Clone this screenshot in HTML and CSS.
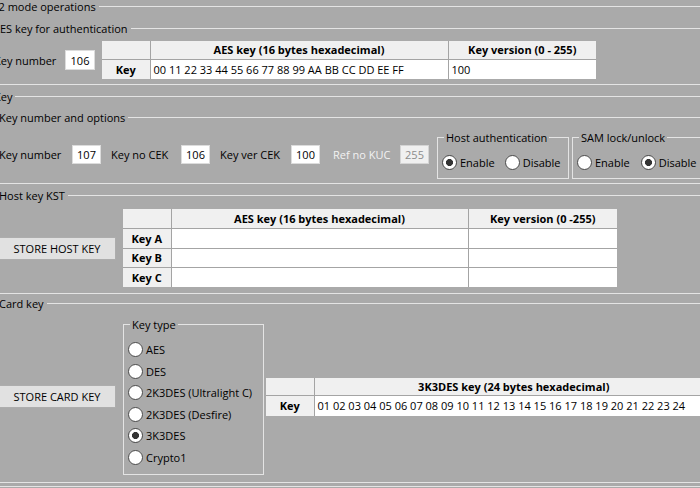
FILE: index.html
```html
<!DOCTYPE html>
<html>
<head>
<meta charset="utf-8">
<link rel="stylesheet" href="styles.css">
</head>
<body>
<div class="viewport">
  <div class="canvas">
    <div class="gt t-outer"><span>AV2 mode operations</span></div>

    <div class="gt t-aes"><span>AES key for authentication</span></div>
    <div class="aes-row">
      <span class="lbl lbl-aesno">Key number</span>
      <span class="num num-aes">106</span>
      <table class="grid aes-grid">
        <colgroup><col class="c48"><col class="c298"><col class="c148"></colgroup>
        <tr class="h18"><th></th><th>AES key (16 bytes hexadecimal)</th><th>Key version (0 - 255)</th></tr>
        <tr class="h20"><th>Key</th><td>00 11 22 33 44 55 66 77 88 99 AA BB CC DD EE FF</td><td>100</td></tr>
      </table>
    </div>
    <div class="gline gl-aes"></div>

    <div class="gt t-key"><span>Key</span></div>

    <div class="gt t-opt"><span>Key number and options</span></div>
    <div class="opt-row">
      <div class="opt-fields">
        <span class="lbl w73">Key number</span>
        <span class="num">107</span>
        <span class="lbl w70 ml10">Key no CEK</span>
        <span class="num">106</span>
        <span class="lbl w71 ml10">Key ver CEK</span>
        <span class="num">100</span>
        <span class="lbl w67 ml13 disabled">Ref no KUC</span>
        <span class="num num-dis">255</span>
      </div>
      <fieldset class="gbox gb-host">
        <legend>Host authentication</legend>
        <div class="radios">
          <span class="radio on">Enable</span>
          <span class="radio r2-host">Disable</span>
        </div>
      </fieldset>
      <fieldset class="gbox gb-sam">
        <legend>SAM lock/unlock</legend>
        <div class="radios">
          <span class="radio">Enable</span>
          <span class="radio on r2-sam">Disable</span>
        </div>
      </fieldset>
    </div>
    <div class="gline gl-opt"></div>

    <div class="gt t-host"><span>Host key KST</span></div>
    <div class="host-row">
      <div class="btn">STORE HOST KEY</div>
      <table class="grid host-grid">
        <colgroup><col class="c48"><col class="c297"><col class="c149"></colgroup>
        <tr class="h19"><th></th><th>AES key (16 bytes hexadecimal)</th><th>Key version (0 -255)</th></tr>
        <tr class="h20"><th>Key A</th><td></td><td></td></tr>
        <tr class="h19"><th>Key B</th><td></td><td></td></tr>
        <tr class="h20"><th>Key C</th><td></td><td></td></tr>
      </table>
    </div>
    <div class="gline gl-host"></div>

    <div class="gt t-card"><span>Card key</span></div>
    <div class="card-row">
      <div class="btn">STORE CARD KEY</div>
      <fieldset class="gbox gb-type">
        <legend>Key type</legend>
        <div class="rlist">
          <span class="radio">AES</span>
          <span class="radio">DES</span>
          <span class="radio">2K3DES (Ultralight C)</span>
          <span class="radio">2K3DES (Desfire)</span>
          <span class="radio on">3K3DES</span>
          <span class="radio">Crypto1</span>
        </div>
      </fieldset>
      <table class="grid card-grid">
        <colgroup><col class="c48"><col class="c399"></colgroup>
        <tr class="h18"><th></th><th>3K3DES key (24 bytes hexadecimal)</th></tr>
        <tr class="h20"><th>Key</th><td>01 02 03 04 05 06 07 08 09 10 11 12 13 14 15 16 17 18 19 20 21 22 23 24</td></tr>
      </table>
    </div>
    <div class="gline gl-card"></div>
    <div class="gline gl-key"></div>
  </div>
</div>
</body>
</html>
```

FILE: styles.css
```css
* { box-sizing: border-box; }
body {
  margin: 0;
  background: #aaaaaa;
  font-family: "Open Sans", "Noto Sans", sans-serif;
  font-size: 11px;
  color: #000;
}
.viewport { width: 700px; height: 488px; overflow: hidden; }
.canvas { width: 740px; margin-left: -20px; }

/* group titles */
.gt { display: flex; align-items: center; height: 13px; line-height: 13px; white-space: nowrap; }
.gt::after { content: ""; flex: 1; border-top: 1px solid #e4e4e4; margin-left: 3px; }
.gline { border-top: 1px solid #e4e4e4; }

.t-outer { padding-left: 5px; }
.t-aes { margin-top: 9px; padding-left: 13px; }
.t-key { margin-top: 5px; padding-left: 14px; }
.t-opt { margin-top: 8px; padding-left: 19px; }
.t-host { margin-top: 5px; padding-left: 19px; }
.t-card { margin-top: 3px; padding-left: 19px; }

.gl-aes { margin-top: 5px; }
.gl-opt { margin-top: 4px; }
.gl-host { margin-top: 6px; }
.gl-card { margin-top: 7px; }
.gl-key { margin-top: 3px; }

/* labels and numeric boxes */
.lbl { white-space: nowrap; }
.lbl-aesno { width: 71px; }
.w73 { width: 73px; }
.w70 { width: 70px; }
.w71 { width: 71px; }
.w67 { width: 67px; }
.ml10 { margin-left: 10px; }
.ml13 { margin-left: 13px; }
.disabled { color: #f2f2f2; }

.num {
  display: flex; align-items: center; justify-content: center;
  width: 29px; height: 19px;
  background: #fff; border: 1px solid #dcdcdc;
}
.num-aes { width: 30px; height: 20px; margin-right: 7px; }
.num-dis { background: #f0f0f0; color: #8c8c8c; border-color: #d4d4d4; }

/* rows */
.aes-row { display: flex; align-items: center; margin-top: 6px; padding-left: 14px; }
.opt-row { display: flex; align-items: flex-start; margin-top: 7px; padding-left: 19px; }
.opt-fields { display: flex; align-items: center; margin-top: 14px; }
.host-row { display: flex; align-items: center; margin-top: 7px; padding-left: 18px; }
.card-row { display: flex; align-items: center; margin-top: 8px; padding-left: 18px; }

/* buttons */
.btn {
  width: 118px; height: 23px; flex: none;
  display: flex; align-items: center; justify-content: center;
  background: #e1e1e1; border: 1px solid #adadad;
  margin-right: 7px; white-space: nowrap;
}

/* group boxes */
.gbox { margin: 0; border: 1px solid #e4e4e4; min-width: 0; flex: none; }
.gbox legend { margin-left: 2px; padding: 0 2px; line-height: 13px; white-space: nowrap; }
.gb-host { width: 132px; height: 48px; margin-left: 8px; padding: 11px 4px 0 4px; }
.gb-sam { width: 150px; height: 48px; margin-left: 3px; padding: 11px 4px 0 4px; }
.gb-type { width: 141px; height: 157px; margin-right: 2px; padding: 8px 4px 0 4px; }

.radios { display: flex; align-items: center; }
.r2-host { margin-left: 10px; }
.r2-sam { margin-left: 11px; }
.rlist { display: flex; flex-direction: column; }
.rlist .radio { height: 21.5px; }

.radio { display: flex; align-items: center; white-space: nowrap; line-height: 13px; }
.radio::before {
  content: ""; flex: none; width: 13px; height: 13px; border-radius: 50%;
  background: #fff; border: 1px solid #4a4a4a; margin-right: 3px;
}
.radio.on::before { background: radial-gradient(circle, #333 0 3.2px, #fff 3.8px); }

/* grids */
.grid { border-collapse: collapse; table-layout: fixed; border-style: hidden; flex: none; }
.grid th, .grid td {
  border: 1px solid #a4a4a4; padding: 0 3px; white-space: nowrap; overflow: hidden;
  line-height: 13px;
}
.grid th { background: #f0f0f0; font-weight: bold; text-align: center; }
.grid td { background: #fff; text-align: left; }
.aes-grid { width: 493px; }
.host-grid { width: 494px; }
.card-grid { width: 447px; }
.c48 { width: 48px; }
.c298 { width: 298px; }
.c148 { width: 148px; }
.c297 { width: 297px; }
.c149 { width: 149px; }
.c399 { width: 399px; }
.h18 { height: 18px; }
.h19 { height: 19px; }
.h20 { height: 20px; }
```
